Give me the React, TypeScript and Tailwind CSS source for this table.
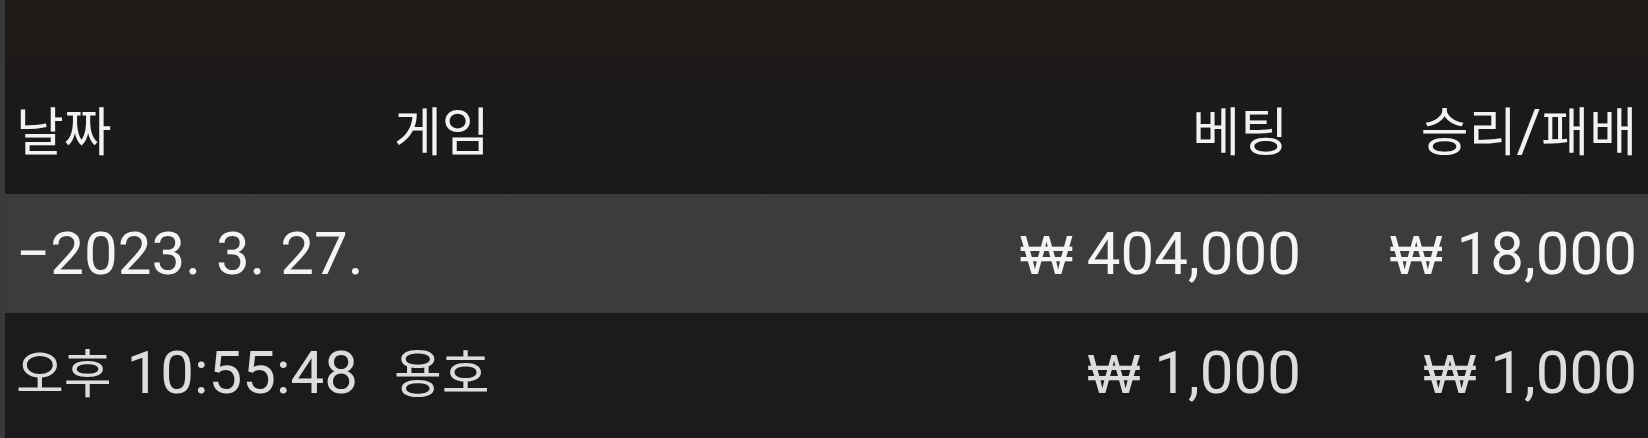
import React from 'react'

// Korean glyphs render a bit smaller than the Latin digits (Android-style fallback)
function Ko({ children }: { children: React.ReactNode }) {
  return <span className="font-['Noto_Sans_CJK_KR',sans-serif] text-[52px]">{children}</span>
}

// Wide won sign with double bar
function Won() {
  return <span className="font-['DejaVu_Sans',sans-serif] font-extralight text-[56px] mr-[14px]">₩</span>
}

interface BetRow {
  date: React.ReactNode
  game: React.ReactNode
  bet: string
  result: string
  summary?: boolean
}

const ROWS: BetRow[] = [
  { date: '−2023. 3. 27.', game: '', bet: '404,000', result: '18,000', summary: true },
  { date: <><Ko>오후</Ko> 10:55:48</>, game: <Ko>용호</Ko>, bet: '1,000', result: '1,000' },
]

function App() {
  return (
    <div className="w-full h-[438px] overflow-hidden bg-[#1b1b1b] border-l-[5px] border-[#3a3a3a] font-['Roboto','Noto_Sans_CJK_KR',sans-serif] text-[60px] leading-none">
      {/* Header */}
      <div className="h-[194px] pt-[68px] pl-[11px] pr-[11px] flex items-center text-[#f2f2f2] bg-gradient-to-b from-[#1e1a18] to-[#1a1a1a]">
        <div className="w-[378px]"><Ko>날짜</Ko></div>
        <div className="flex-1"><Ko>게임</Ko></div>
        <div className="w-[300px] text-right pr-[13px]"><Ko>베팅</Ko></div>
        <div className="w-[336px] text-right"><Ko>승리</Ko>/<Ko>패배</Ko></div>
      </div>

      {/* Rows */}
      {ROWS.map((row, i) => (
        <div
          key={i}
          className={`h-[119px] pl-[11px] pr-[11px] flex items-center ${
            row.summary ? 'bg-[#3c3c3c] text-[#f4f4f4]' : 'bg-[#1b1b1b] text-[#dcdcdc]'
          }`}
        >
          <div className="w-[378px] whitespace-nowrap">{row.date}</div>
          <div className="flex-1">{row.game}</div>
          <div className="w-[300px] text-right whitespace-nowrap"><Won />{row.bet}</div>
          <div className="w-[336px] text-right whitespace-nowrap"><Won />{row.result}</div>
        </div>
      ))}
    </div>
  )
}

export default App
